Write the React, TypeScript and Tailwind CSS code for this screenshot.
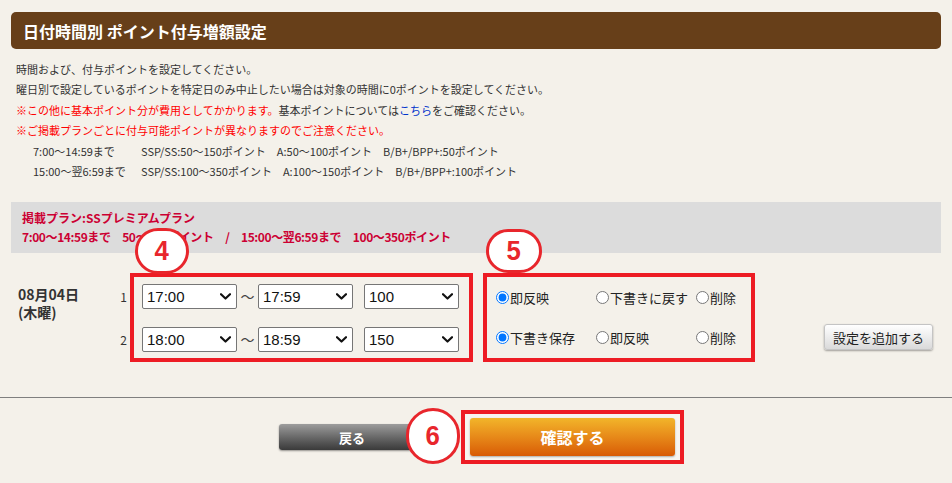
import React from "react";

function Circle({ n, className }: { n: string; className: string }) {
  return (
    <div
      className={
        "absolute flex items-center justify-center rounded-full border-[3px] border-[#e8262c] bg-white text-[#e8262c] font-['Liberation_Sans',Arial,sans-serif] font-bold text-[28px] leading-none " +
        className
      }
    >
      <span className="scale-x-[0.92]">{n}</span>
    </div>
  );
}

function Select({ value }: { value: string }) {
  return (
    <div className="flex h-[25px] w-[95px] items-center justify-between rounded-[2px] border border-[#767676] bg-white pl-[4px] pr-[5px] text-[15px] text-[#111] font-['Liberation_Sans',Arial,sans-serif]">
      <span className="leading-none">{value}</span>
      <svg width="11" height="7" viewBox="0 0 11 7">
        <path d="M1 1.2 L5.5 5.5 L10 1.2" fill="none" stroke="#111" strokeWidth="2.2" strokeLinecap="round" strokeLinejoin="round" />
      </svg>
    </div>
  );
}

function Radio({ label, name, checked }: { label: string; name: string; checked?: boolean }) {
  return (
    <label className="flex items-center">
      <input type="radio" defaultChecked={checked} className="m-0 h-[13px] w-[13px]" name={name} />
      <span className="ml-[1px] text-[13px] leading-none text-[#222]">{label}</span>
    </label>
  );
}

export default function App() {
  return (
    <div className="min-h-[483px] w-full bg-[#f4f1ea] pt-[12px] font-['Noto_Sans_CJK_JP','Noto_Sans',sans-serif] text-[#333]">
      <div className="px-[11px]">
        <div className="flex h-[37px] items-center rounded-[5px] bg-[#673f19] pl-[12px]">
          <h1 className="text-[16px] font-bold leading-none text-white">日付時間別 ポイント付与増額設定</h1>
        </div>

        <div className="mt-[10px] pl-[5px] text-[11px] leading-[20.4px] text-[#333]">
          <p>時間および、付与ポイントを設定してください。</p>
          <p>曜日別で設定しているポイントを特定日のみ中止したい場合は対象の時間に0ポイントを設定してください。</p>
          <p>
            <span className="text-[#ff0000]">※この他に基本ポイント分が費用としてかかります。</span>
            基本ポイントについては<span className="text-[#0033cc]">こちら</span>をご確認ください。
          </p>
          <p className="text-[#ff0000]">※ご掲載プランごとに付与可能ポイントが異なりますのでご注意ください。</p>
          <p className="pl-[17px] whitespace-pre">
            <span className="inline-block w-[108px]">7:00〜14:59まで</span>
            SSP/SS:50〜150ポイント　A:50〜100ポイント　B/B+/BPP+:50ポイント
          </p>
          <p className="pl-[17px] whitespace-pre">
            <span className="inline-block w-[108px]">15:00〜翌6:59まで</span>
            SSP/SS:100〜350ポイント　A:100〜150ポイント　B/B+/BPP+:100ポイント
          </p>
        </div>

        <div className="mt-[21px] bg-[#dcdcdc] pb-[7px] pl-[11px] pt-[6px] text-[12px] font-bold leading-[19px] text-[#cc0033]">
          <p>掲載プラン:SSプレミアムプラン</p>
          <p className="whitespace-pre tracking-[-0.4px]">7:00〜14:59まで　50〜150ポイント　/　15:00〜翌6:59まで　100〜350ポイント</p>
        </div>

        <div className="mt-[20px] flex items-start">
          <div className="w-[108px] pl-[7px] pt-[12px] text-[14px] font-bold leading-[18px] text-[#333]">
            <p>08月04日</p>
            <p>(木曜)</p>
          </div>
          <div className="flex w-[11px] flex-col gap-[18px] pt-[11px] pr-[3px] text-right text-[12px] leading-[25px] text-[#333]">
            <span>1</span>
            <span>2</span>
          </div>

          <div className="relative border-4 border-[#ed1c24] pb-[6px] pl-[8px] pr-[10px] pt-[7px]">
            <Circle n="4" className="-top-[49px] left-[1px] h-[46px] w-[54px]" />
            <div className="flex flex-col gap-[18px]">
              <div className="flex items-center">
                <Select value="17:00" />
                <span className="w-[21px] text-center text-[14px] text-[#444]">〜</span>
                <Select value="17:59" />
                <div className="w-[11px]" />
                <Select value="100" />
              </div>
              <div className="flex items-center">
                <Select value="18:00" />
                <span className="w-[21px] text-center text-[14px] text-[#444]">〜</span>
                <Select value="18:59" />
                <div className="w-[11px]" />
                <Select value="150" />
              </div>
            </div>
          </div>

          <div className="relative ml-[10px] h-[89px] w-[272px] border-4 border-[#ed1c24] pl-[9px] pt-[14px]">
            <Circle n="5" className="-top-[48px] left-[-1px] h-[44px] w-[56px]" />
            <div className="grid grid-cols-[100px_100px_60px] gap-y-[27px]">
              <Radio label="即反映" name="r1" checked />
              <Radio label="下書きに戻す" name="r1" />
              <Radio label="削除" name="r1" />
              <Radio label="下書き保存" name="r2" checked />
              <Radio label="即反映" name="r2" />
              <Radio label="削除" name="r2" />
            </div>
          </div>

          <button className="ml-[69px] mt-[51px] h-[26px] w-[109px] rounded-[3px] border border-[#c4c4c4] bg-gradient-to-b from-[#ffffff] to-[#dadada] text-[13px] text-[#222] shadow-[0_1px_2px_rgba(0,0,0,0.35)]">
            設定を追加する
          </button>
        </div>
      </div>

      <div className="mt-[35px] h-px w-full bg-[#7f7f7f]" />

      <div className="mt-[12px] flex items-center pl-[279px]">
        <button className="h-[26px] w-[146px] rounded-[3px] bg-gradient-to-b from-[#9d9d9d] to-[#3a3a3a] text-[13px] font-bold text-white shadow-[0_1px_2px_rgba(0,0,0,0.4)]">
          戻る
        </button>
        <div className="relative ml-[36px] border-4 border-[#ed1c24] bg-[#f7f5f0] px-[5px] py-[4px]">
          <Circle n="6" className="-left-[59px] -top-[6px] h-[56px] w-[54px]" />
          <button className="h-[38px] w-[205px] rounded-[3px] bg-gradient-to-b from-[#f2b52a] to-[#d85a04] text-[16px] font-bold text-white shadow-[0_1px_2px_rgba(0,0,0,0.3)]">
            確認する
          </button>
        </div>
      </div>
    </div>
  );
}
